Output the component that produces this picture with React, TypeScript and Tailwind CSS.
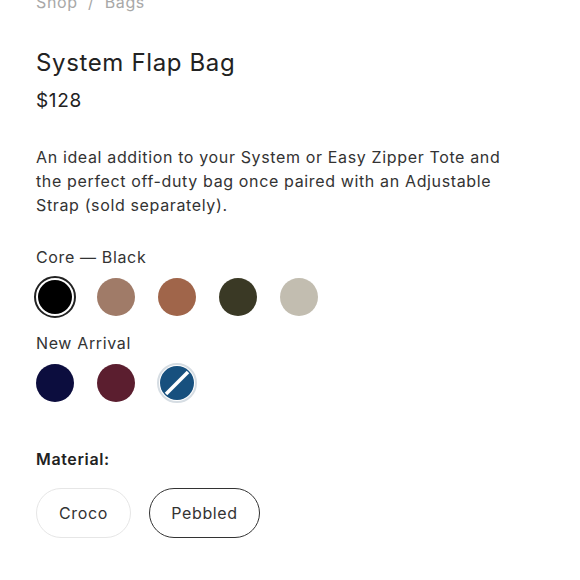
import React from "react";

const core = ["#000000", "#a07b68", "#a0654a", "#3a3925", "#c2bdb0"];
const arrivals = ["#0c0d3e", "#5b1e2f"];

export default function App() {
  return (
    <div className="w-[580px] h-[580px] overflow-hidden bg-white text-[#222] tracking-[0.04em]" style={{ fontFamily: "Inter, 'Noto Sans', sans-serif" }}>
      <div className="pl-[36px] pr-[40px]">
        <div className="-mt-[8px] text-[16px] leading-[20px] text-[#a8a8a8] whitespace-pre">Shop  /  Bags</div>
        <h1 className="mt-[35px] text-[24px] leading-[32px] font-normal text-[#222]">System Flap Bag</h1>
        <div className="mt-[9px] text-[19px] leading-[26px] text-[#222]">$128</div>
        <p className="mt-[31px] text-[16px] leading-[24px] text-[#333] w-[520px]">
          An ideal addition to your System or Easy Zipper Tote and
          <br />
          the perfect off-duty bag once paired with an Adjustable
          <br />
          Strap (sold separately).
        </p>
        <div className="mt-[29px] text-[16px] leading-[22px] text-[#333]">Core — Black</div>
        <div className="mt-[8px] -ml-[2px] flex items-center gap-[19px]">
          {core.map((c, i) =>
            i === 0 ? (
              <div key={c} className="w-[42px] h-[42px] rounded-full border-2 border-[#222] p-[2px] bg-white">
                <div className="w-full h-full rounded-full" style={{ backgroundColor: c }} />
              </div>
            ) : (
              <div key={c} className="w-[42px] h-[42px] flex items-center justify-center">
                <div className="w-[38px] h-[38px] rounded-full" style={{ backgroundColor: c }} />
              </div>
            )
          )}
        </div>
        <div className="mt-[14px] text-[16px] leading-[22px] text-[#333]">New Arrival</div>
        <div className="mt-[8px] -ml-[2px] flex items-center gap-[19px]">
          {arrivals.map((c) => (
            <div key={c} className="w-[42px] h-[42px] flex items-center justify-center">
              <div className="w-[38px] h-[38px] rounded-full" style={{ backgroundColor: c }} />
            </div>
          ))}
          <div className="w-[42px] h-[42px] flex items-center justify-center">
            <div className="w-[40px] h-[40px] rounded-full border-2 border-[#d6dde3] p-[1px] bg-white">
              <svg viewBox="0 0 34 34" className="w-full h-full block">
                <circle cx="17" cy="17" r="17" fill="#17507e" />
                <line x1="6" y1="28" x2="28" y2="6" stroke="#ffffff" strokeWidth="3.5" />
              </svg>
            </div>
          </div>
        </div>
        <div className="mt-[44px] text-[16px] leading-[22px] font-semibold text-[#222]">Material:</div>
        <div className="mt-[18px] flex items-center gap-[18px]">
          <button className="h-[50px] w-[95px] rounded-full border border-[#e6e6e6] text-[16px] text-[#333] bg-white tracking-[0.04em]">Croco</button>
          <button className="h-[50px] w-[111px] rounded-full border border-[#333] text-[16px] text-[#333] bg-white tracking-[0.04em]">Pebbled</button>
        </div>
      </div>
    </div>
  );
}
